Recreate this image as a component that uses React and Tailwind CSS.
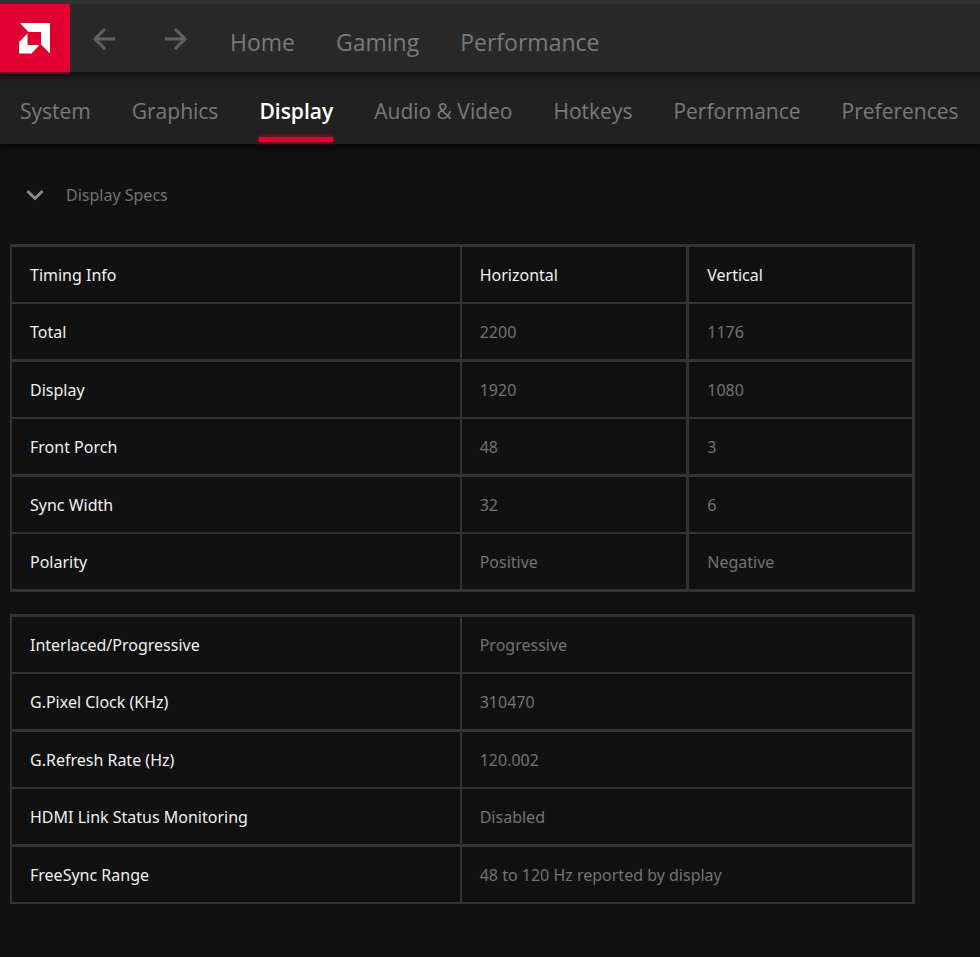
import React from "react";

const mainLinks = ["Home", "Gaming", "Performance"];

const tabs = [
  "System",
  "Graphics",
  "Display",
  "Audio & Video",
  "Hotkeys",
  "Performance",
  "Preferences",
];

const timingRows = [
  ["Total", "2200", "1176"],
  ["Display", "1920", "1080"],
  ["Front Porch", "48", "3"],
  ["Sync Width", "32", "6"],
  ["Polarity", "Positive", "Negative"],
];

const signalRows = [
  ["Interlaced/Progressive", "Progressive"],
  ["G.Pixel Clock (KHz)", "310470"],
  ["G.Refresh Rate (Hz)", "120.002"],
  ["HDMI Link Status Monitoring", "Disabled"],
  ["FreeSync Range", "48 to 120 Hz reported by display"],
];

const tableClass =
  "w-full table-fixed border-separate border-spacing-0 border-l-2 border-t-[3px] border-[#333333] text-left";
const cellClass = "border-[#333333] px-[18px] py-0 font-normal";
const thinRow = "h-[57px] border-b-2";
const thickRow = "h-[58px] border-b-[3px]";

function Logo() {
  return (
    <svg viewBox="0 0 31 31" className="size-[31px]" fill="#ffffff" aria-hidden="true">
      <path d="M1 0H31V30.500L22 21.500V9H9.500Z" />
      <path d="M0 19L8.500 10.500V22H20.500L12.500 30.500H0Z" />
    </svg>
  );
}

function Arrow({ back }) {
  return (
    <svg
      viewBox="0 0 24 24"
      className="size-6"
      fill="none"
      stroke="#606060"
      strokeWidth="3"
      aria-hidden="true"
    >
      <path d={back ? "M23 12H3M13 2L3 12L13 22" : "M1 12H21M11 2L21 12L11 22"} />
    </svg>
  );
}

function Header() {
  return (
    <header className="relative z-10 flex h-[72px] border-t-4 border-[#333333] bg-[#292929] shadow-[0_2px_8px_2px_rgba(0,0,0,0.6)]">
      <a
        href="#home"
        aria-label="AMD Radeon Software"
        className="flex h-[68px] w-[70px] shrink-0 items-center bg-[#e0002f] pl-[19px] shadow-[0_2px_0_#7d0019]"
      >
        <Logo />
      </a>
      <div className="flex items-center gap-12 pl-[22px] pt-[2px]">
        <button type="button" aria-label="Back">
          <Arrow back />
        </button>
        <button type="button" aria-label="Forward">
          <Arrow />
        </button>
      </div>
      <nav aria-label="Main" className="flex items-center gap-[41px] pl-[42px] pt-2 text-[23px] text-[#7a7a7a]">
        {mainLinks.map((label) => (
          <a key={label} href={"#" + label.toLowerCase()}>
            {label}
          </a>
        ))}
      </nav>
    </header>
  );
}

function Tabs() {
  return (
    <nav
      aria-label="Settings"
      className="relative flex h-[72px] gap-[41px] bg-[#212121] pl-5 text-[21px] text-[#7a7a7a] shadow-[0_2px_8px_2px_rgba(0,0,0,0.6)]"
    >
      {tabs.map((label) =>
        label === "Display" ? (
          <a
            key={label}
            href="#display"
            aria-current="page"
            className="flex flex-col justify-between whitespace-nowrap pb-[2px] pt-6 font-semibold text-white"
          >
            {label}
            <span className="h-[5px] bg-[#e0002f] shadow-[0_0_4px_1px_rgba(224,0,47,0.6)]" />
          </a>
        ) : (
          <a key={label} href={"#tab-" + label} className="whitespace-nowrap pt-6">
            {label}
          </a>
        )
      )}
    </nav>
  );
}

function TimingTable() {
  return (
    <table className={tableClass}>
      <colgroup>
        <col className="w-[49.8%]" />
        <col className="w-[25.2%]" />
        <col />
      </colgroup>
      <thead>
        <tr className="text-[#f0f0f0]">
          <th scope="col" className={cellClass + " border-r-2 " + thinRow}>Timing Info</th>
          <th scope="col" className={cellClass + " border-r-[3px] " + thinRow}>Horizontal</th>
          <th scope="col" className={cellClass + " border-r-[3px] " + thinRow}>Vertical</th>
        </tr>
      </thead>
      <tbody>
        {timingRows.map(([name, horizontal, vertical], i) => {
          const row = i % 2 ? thinRow : thickRow;
          return (
            <tr key={name} className="text-[#737373]">
              <th scope="row" className={cellClass + " border-r-2 text-[#f0f0f0] " + row}>{name}</th>
              <td className={cellClass + " border-r-[3px] " + row}>{horizontal}</td>
              <td className={cellClass + " border-r-[3px] " + row}>{vertical}</td>
            </tr>
          );
        })}
      </tbody>
    </table>
  );
}

function SignalTable() {
  return (
    <table className={tableClass}>
      <colgroup>
        <col className="w-[49.8%]" />
        <col />
      </colgroup>
      <tbody>
        {signalRows.map(([name, value], i) => {
          const row = i % 2 ? thickRow : thinRow;
          return (
            <tr key={name} className="text-[#737373]">
              <th scope="row" className={cellClass + " border-r-2 text-[#f0f0f0] " + row}>{name}</th>
              <td className={cellClass + " border-r-[3px] " + row}>{value}</td>
            </tr>
          );
        })}
      </tbody>
    </table>
  );
}

export default function App() {
  return (
    <div className="min-h-screen bg-[#111111] font-['Open_Sans','Noto_Sans',sans-serif]">
      <Header />
      <Tabs />
      <main className="pb-12 pl-[10px] pr-[65px] pt-[35px] font-['Noto_Sans','Open_Sans',sans-serif] text-base">
        <button
          type="button"
          aria-expanded="true"
          className="flex h-8 items-center gap-[22px] pl-4 text-[#737373]"
        >
          <svg viewBox="0 0 18 12" className="h-3 w-[18px]" fill="none" stroke="#8a8a8a" strokeWidth="3" aria-hidden="true">
            <path d="M1.500 2L9 9.500L16.500 2" />
          </svg>
          Display Specs
        </button>
        <div className="flex flex-col gap-[22px] pt-[33px]">
          <TimingTable />
          <SignalTable />
        </div>
      </main>
    </div>
  );
}
